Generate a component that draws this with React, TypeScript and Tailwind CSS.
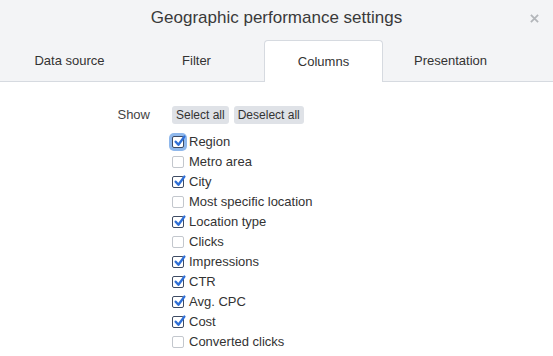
import React from 'react';

const columns: { label: string; checked: boolean; focus?: boolean }[] = [
  { label: 'Region', checked: true, focus: true },
  { label: 'Metro area', checked: false },
  { label: 'City', checked: true },
  { label: 'Most specific location', checked: false },
  { label: 'Location type', checked: true },
  { label: 'Clicks', checked: false },
  { label: 'Impressions', checked: true },
  { label: 'CTR', checked: true },
  { label: 'Avg. CPC', checked: true },
  { label: 'Cost', checked: true },
  { label: 'Converted clicks', checked: false },
];

const tabs = ['Data source', 'Filter', 'Columns', 'Presentation'];

const Box = ({ checked, focus }: { checked: boolean; focus?: boolean }) => (
  <span
    className={`relative flex h-[12px] w-[12px] shrink-0 items-center justify-center rounded-[2px] border bg-white ${
      checked ? 'border-[#3d4a63]' : 'border-[#c3c7cd]'
    } ${focus ? 'ring-[3px] ring-[#8fb8ec]' : ''}`}
  >
    {checked && (
      <svg viewBox="0 0 12 12" className="absolute -top-[2px] left-[0px] h-[13px] w-[13px]">
        <path d="M2.5 6.2 L5 9 L10.5 1.5" fill="none" stroke="#2f6fd6" strokeWidth="2.2" strokeLinecap="round" strokeLinejoin="round" />
      </svg>
    )}
  </span>
);

export default function App() {
  return (
    <div className="h-[356px] w-[553px] overflow-hidden bg-white text-[#333] [font-family:'Liberation_Sans',Arial,sans-serif]">
      {/* Header */}
      <div className="relative h-[82px] border-b border-[#d6dae0] bg-[#f3f4f6]">
        <div className="pt-[6px] text-center text-[17px] leading-[24px] text-[#3a3a3a]">
          Geographic performance settings
        </div>
        <svg viewBox="0 0 10 10" className="absolute right-[14px] top-[14px] h-[9px] w-[9px]">
          <path d="M1 1 L9 9 M9 1 L1 9" stroke="#b3b6ba" strokeWidth="2" />
        </svg>
        <div className="absolute bottom-[-1px] left-[10px] flex gap-[8px]">
          {tabs.map((t) =>
            t === 'Columns' ? (
              <div
                key={t}
                className="flex h-[42px] w-[119px] items-center justify-center rounded-t-[4px] border border-b-0 border-[#d6dae0] bg-white pt-[1px] text-[13px] text-[#333]"
              >
                {t}
              </div>
            ) : (
              <div key={t} className="flex h-[41px] w-[119px] items-center justify-center pt-[1px] text-[13px] text-[#333]">
                {t}
              </div>
            )
          )}
        </div>
      </div>

      {/* Body */}
      <div className="flex pt-[24px]">
        <div className="w-[151px] pr-[1px] text-right text-[13px] leading-[18px] text-[#444]">Show</div>
        <div className="ml-[21px]">
          <div className="flex gap-[5px]">
            <button className="h-[18px] rounded-[3px] bg-[#dfe2e7] px-[4px] text-[12px] leading-[18px] text-[#333]">
              Select all
            </button>
            <button className="h-[18px] rounded-[3px] bg-[#dfe2e7] px-[4px] text-[12px] leading-[18px] text-[#333]">
              Deselect all
            </button>
          </div>
          <ul className="mt-[8px]">
            {columns.map((c) => (
              <li key={c.label} className="flex h-[20px] items-center gap-[5px] text-[13px] text-[#333]">
                <Box checked={c.checked} focus={c.focus} />
                <span>{c.label}</span>
              </li>
            ))}
          </ul>
        </div>
      </div>
    </div>
  );
}
